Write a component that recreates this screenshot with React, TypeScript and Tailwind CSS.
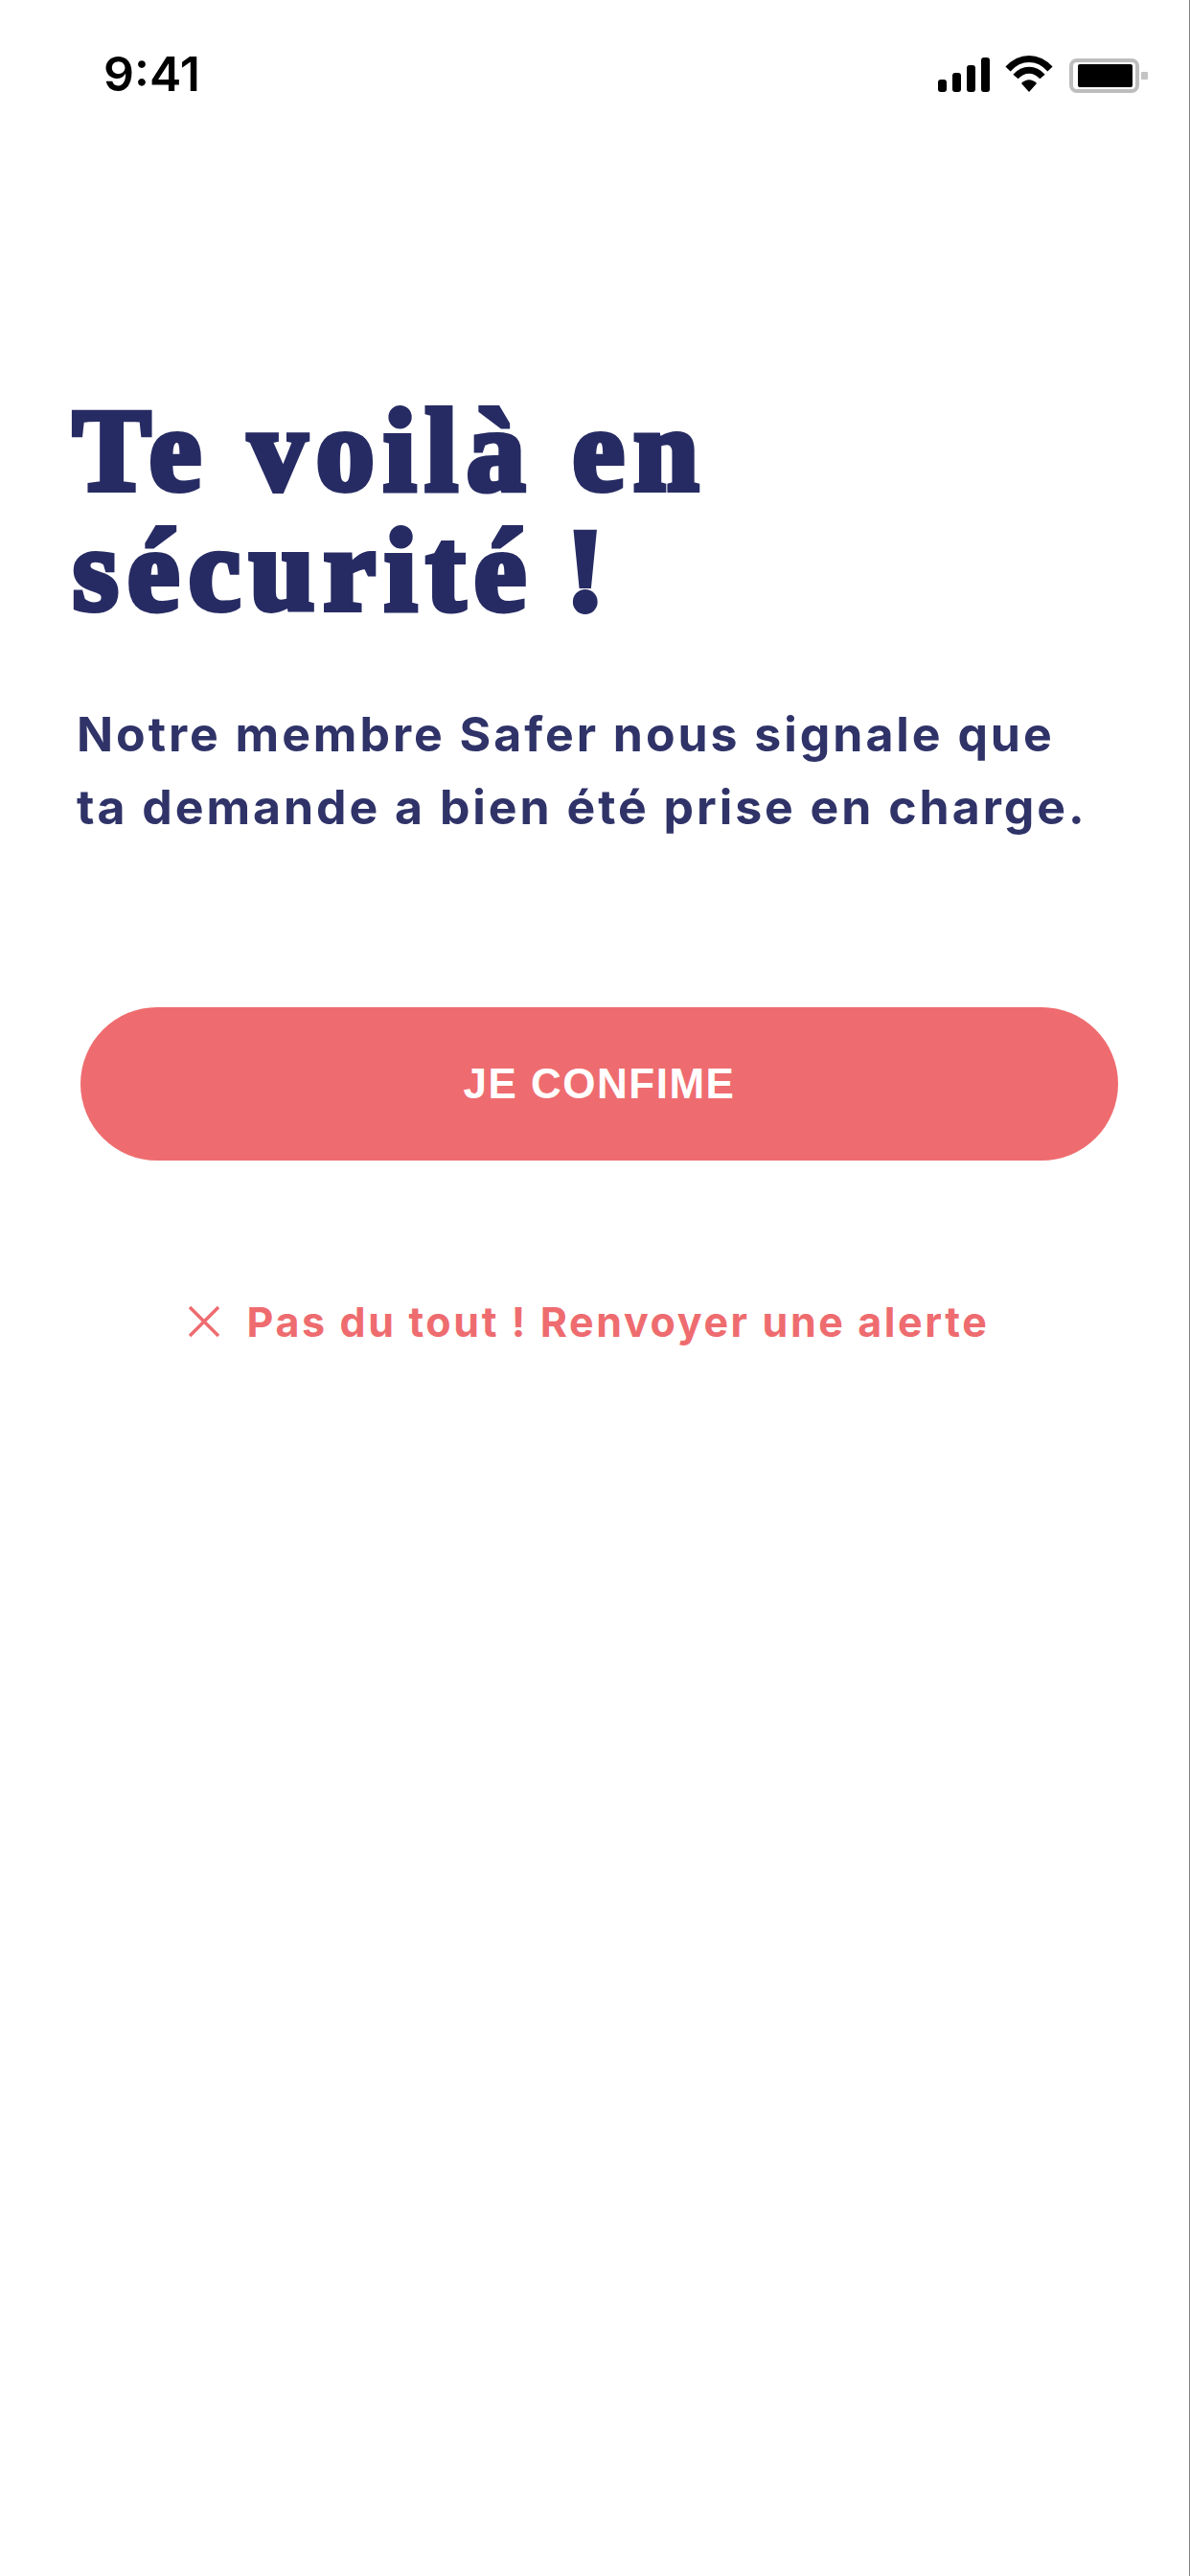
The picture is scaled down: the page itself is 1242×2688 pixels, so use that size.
import React from 'react';

function StatusIcons() {
  return (
    <svg width="227" height="40" viewBox="0 0 227 40" fill="none">
      {/* signal */}
      <rect x="0" y="25" width="9" height="13" rx="3" fill="#000" />
      <rect x="15" y="18" width="9" height="20" rx="3" fill="#000" />
      <rect x="30" y="10" width="9" height="28" rx="3" fill="#000" />
      <rect x="45" y="2" width="9" height="36" rx="3" fill="#000" />
      {/* wifi */}
      <path d="M73 14 C86 0 104 0 117 14" stroke="#000" strokeWidth="7" />
      <path d="M81 22 C89 13 101 13 109 22" stroke="#000" strokeWidth="7" />
      <path d="M87 29 L95 38 L103 29 C98 24 92 24 87 29 Z" fill="#000" />
      {/* battery */}
      <rect x="139" y="5" width="69" height="32" rx="6" stroke="#bdbdbd" strokeWidth="4" />
      <rect x="146" y="9" width="57" height="24" rx="2" fill="#000" />
      <rect x="212" y="17" width="7" height="8" rx="1" fill="#c4c4c4" />
    </svg>
  );
}

export default function App() {
  return (
    <div className="min-h-[2688px] w-[1242px] bg-white border-r border-[#808080] font-['Inter',sans-serif]">
      <div className="flex items-center justify-between pl-[108px] pr-[35px] pt-[50px]">
        <span className="text-[50px] leading-[55px] font-semibold text-black">9:41</span>
        <StatusIcons />
      </div>

      <main className="pt-[302px]">
        <h1 className="pl-[76px] text-[122px] leading-[125px] font-bold tracking-[9.5px] text-[#272b63] font-['Liberation_Serif',serif] [-webkit-text-stroke:6px_#272b63]">
          Te voilà en
          <br />
          <span className="[word-spacing:-8px]">sécurité !</span>
        </h1>

        <p className="mt-[71px] pl-[80px] text-[50px] leading-[76px] font-bold tracking-[2.95px] text-[#2f3368]">
          Notre membre Safer nous signale que
          <br />
          ta demande a bien été prise en charge.
        </p>

        <button className="mt-[171px] ml-[84px] flex h-[160px] w-[1083px] items-center justify-center rounded-full bg-[#ee6c6f] text-[44px] font-bold tracking-[1.5px] text-white font-['Liberation_Sans',sans-serif]">
          JE CONFIME
        </button>

        <div className="mt-[140px] flex items-center justify-center gap-[27px] pr-[14px] text-[#ee6c6f]">
          <svg width="36" height="36" viewBox="0 0 36 36" fill="none" stroke="#ee6c6f" strokeWidth="3.5">
            <path d="M3 3 L33 33 M33 3 L3 33" />
          </svg>
          <span className="text-[43px] leading-[56px] font-bold tracking-[2.6px]">Pas du tout ! Renvoyer une alerte</span>
        </div>
      </main>
    </div>
  );
}
